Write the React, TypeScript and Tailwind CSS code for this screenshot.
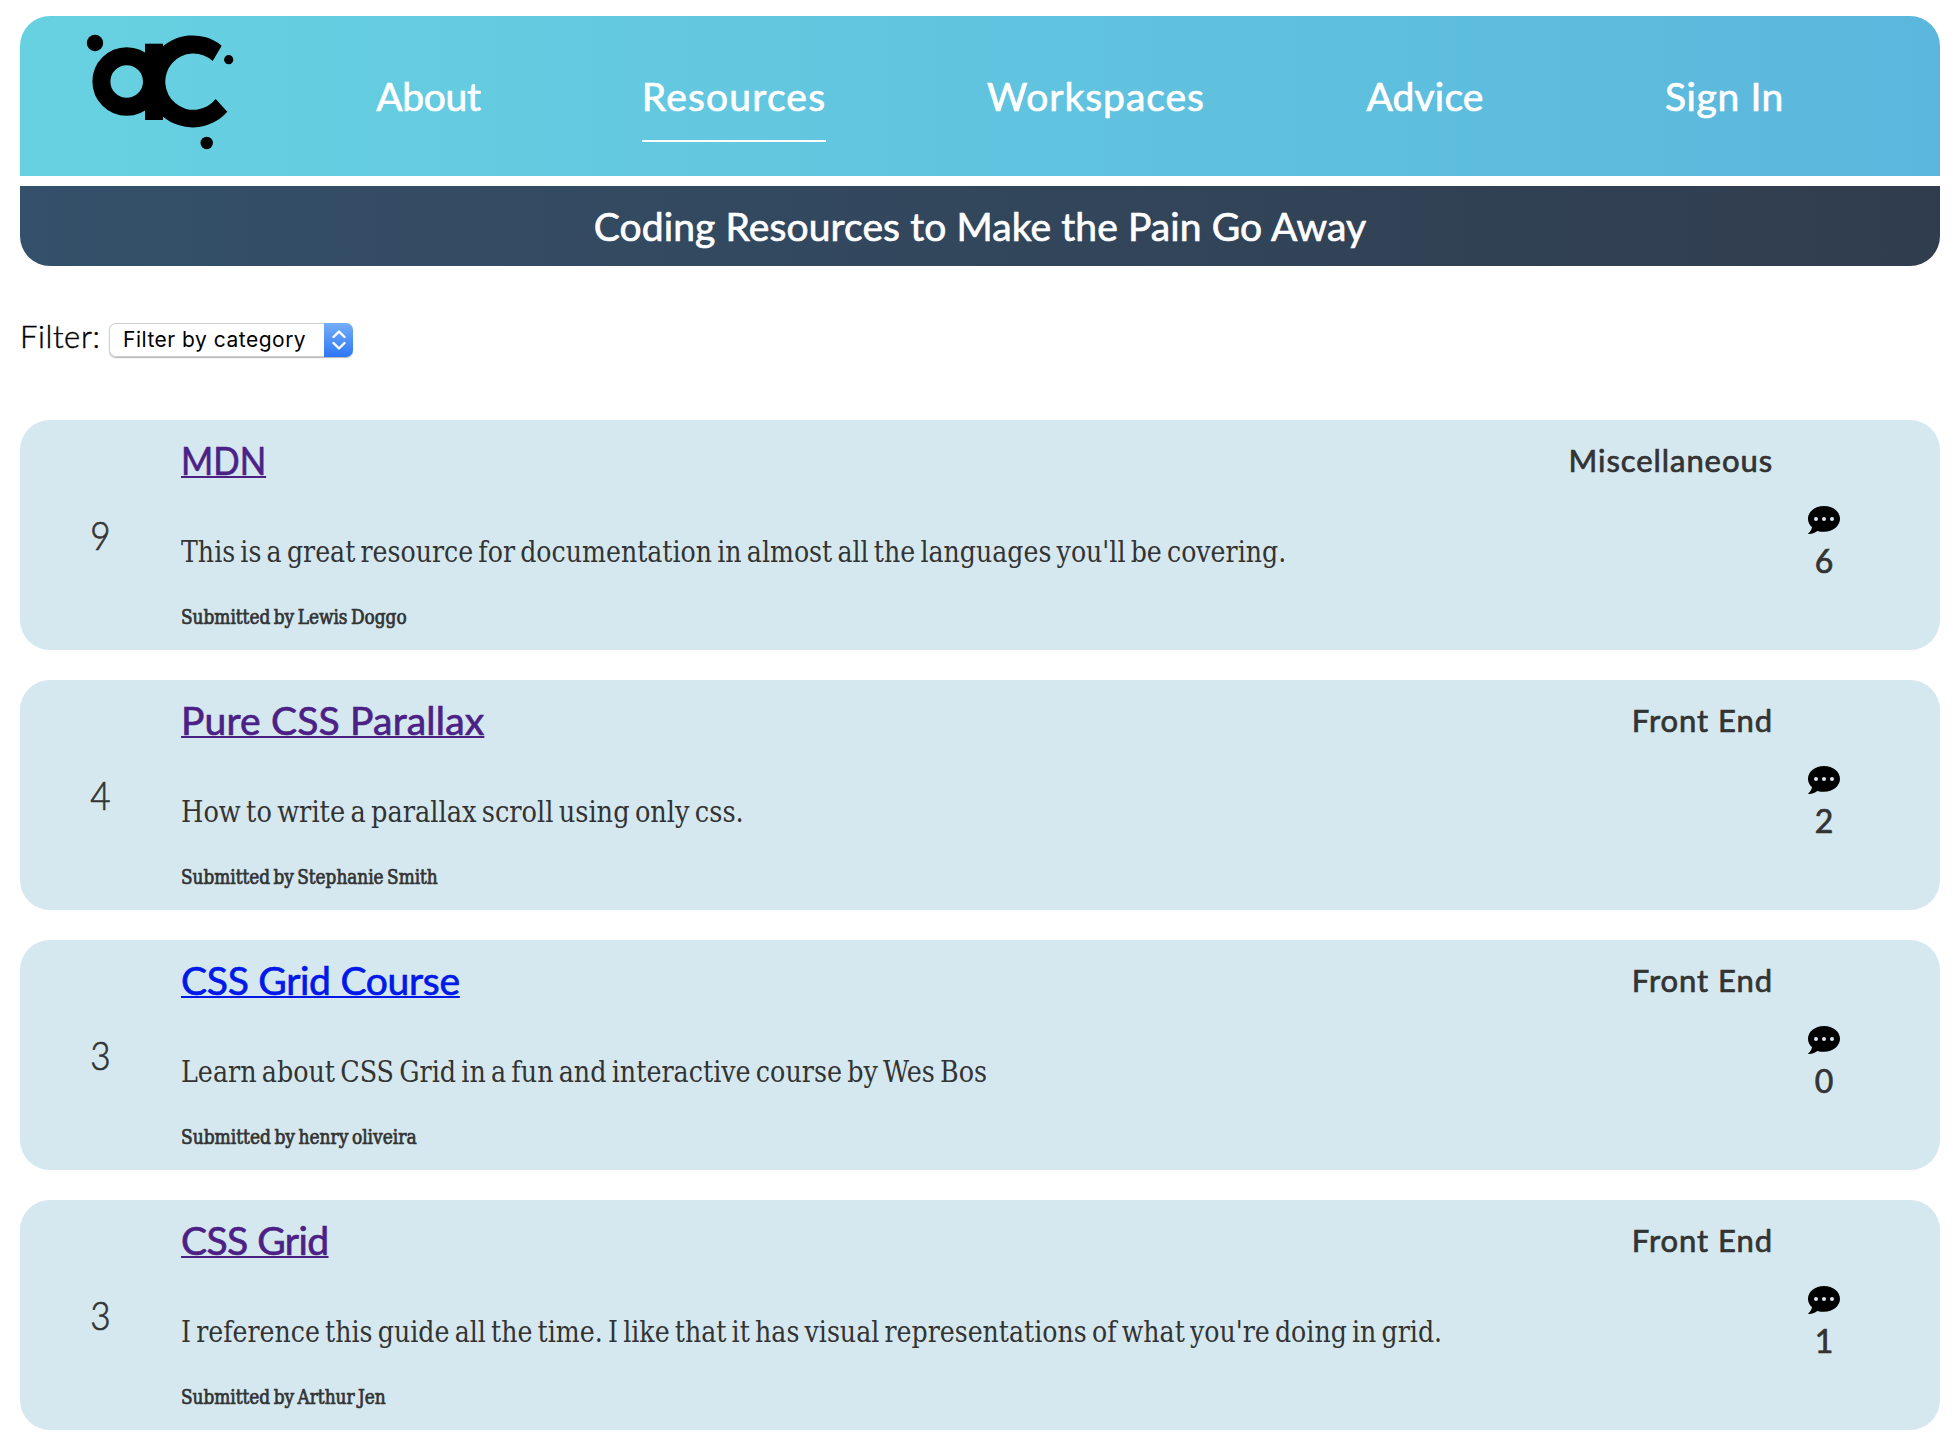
type Resource = {
  votes: number;
  title: string;
  titleClass: string;
  text: string;
  textClass: string;
  author: string;
  authorClass: string;
  category: string;
  categoryClass: string;
  comments: number;
};

const NAV = [
  { label: "About", className: "w-[105px] tracking-[-0.35px] border-transparent" },
  { label: "Resources", className: "w-[184px] tracking-[1.2px] border-white" },
  { label: "Workspaces", className: "w-[218px] tracking-[0.98px] border-transparent" },
  { label: "Advice", className: "w-[118px] tracking-[0.18px] border-transparent" },
  { label: "Sign In", className: "ml-5 w-[119px] tracking-[0.6px] border-transparent" },
];

const RESOURCES: Resource[] = [
  {
    votes: 9,
    title: "MDN",
    titleClass: "text-[#4c2185] scale-x-[0.89]",
    text: "This is a great resource for documentation in almost all the languages you'll be covering.",
    textClass: "scale-x-[0.936]",
    author: "Lewis Doggo",
    authorClass: "scale-x-[0.941]",
    category: "Miscellaneous",
    categoryClass: "tracking-[0.93px]",
    comments: 6,
  },
  {
    votes: 4,
    title: "Pure CSS Parallax",
    titleClass: "text-[#4c2185] tracking-[0.2px]",
    text: "How to write a parallax scroll using only css.",
    textClass: "scale-x-[0.951]",
    author: "Stephanie Smith",
    authorClass: "scale-x-[0.938]",
    category: "Front End",
    categoryClass: "tracking-[0.95px]",
    comments: 2,
  },
  {
    votes: 3,
    title: "CSS Grid Course",
    titleClass: "text-[#0018e8] tracking-[-0.28px]",
    text: "Learn about CSS Grid in a fun and interactive course by Wes Bos",
    textClass: "scale-x-[0.941]",
    author: "henry oliveira",
    authorClass: "scale-x-[0.948]",
    category: "Front End",
    categoryClass: "tracking-[0.95px]",
    comments: 0,
  },
  {
    votes: 3,
    title: "CSS Grid",
    titleClass: "text-[#4c2185] tracking-[-0.55px]",
    text: "I reference this guide all the time. I like that it has visual representations of what you're doing in grid.",
    textClass: "scale-x-[0.936]",
    author: "Arthur Jen",
    authorClass: "scale-x-[0.94]",
    category: "Front End",
    categoryClass: "tracking-[0.95px]",
    comments: 1,
  },
];

function Logo() {
  return (
    <svg viewBox="84 24 152 128" className="h-[128px] w-[152px] shrink-0" role="img" aria-label="ac">
      <circle cx="95" cy="43" r="8.2" />
      <circle cx="228.7" cy="59.7" r="4.6" />
      <circle cx="206.7" cy="143" r="6.2" />
      <circle cx="126.7" cy="81.5" r="25.3" fill="none" stroke="black" strokeWidth="18" />
      <rect x="145" y="43.7" width="18" height="76.3" />
      <path d="M221.7 45.7A46 46 0 1 0 227.3 111.7L215.7 99A28.2 28.2 0 1 1 212.7 61Z" />
    </svg>
  );
}

function CommentIcon() {
  return (
    <svg viewBox="0 0 32 28" className="h-7 w-8 shrink-0">
      <path d="M16 0C7 0 0 5.6 0 12.8c0 3.300 1.500 6.300 4 8.500C3.500 24 2 26.200.3 27.200c-.5.4-.2.8.4.8 3.300-.1 6.300-1.200 8.600-3.100 2.100.6 4.300.9 6.700.9 9 0 16-5.800 16-13S25 0 16 0Z" />
      <g fill="#d5e8ef">
        <circle cx="8" cy="13" r="2" />
        <circle cx="16" cy="13" r="2" />
        <circle cx="24" cy="13" r="2" />
      </g>
    </svg>
  );
}

function CategorySelect() {
  return (
    <button
      type="button"
      className="ml-auto flex h-[34px] w-[244px] overflow-hidden rounded-[7px] bg-white text-left font-['Inter',sans-serif] text-[21px] tracking-[0.5px] text-black shadow-[inset_0_0_0_1px_#d0d0d0,0_1px_1px_#b4b4b4]"
    >
      <span className="flex-1 whitespace-nowrap pl-[14px] leading-[34px]">Filter by category</span>
      <span className="flex w-[29px] items-center justify-center bg-linear-to-b from-[#74aef5] to-[#2d76f7]">
        <svg viewBox="0 0 14 22" className="h-[22px] w-[14px]" fill="none" stroke="white" strokeWidth="2.4" strokeLinecap="round" strokeLinejoin="round">
          <path d="M1.500 8 7 2.500 12.500 8M1.500 14 7 19.500 12.500 14" />
        </svg>
      </span>
    </button>
  );
}

function ResourceCard({ item }: { item: Resource }) {
  return (
    <article className="flex h-[230px] rounded-[30px] bg-[#d5e8ef] text-[#333]">
      <div className="flex w-[161px] items-center justify-center text-[39px] font-light leading-none [-webkit-text-stroke:0.7px]">
        <span className="scale-x-[0.9]">{item.votes}</span>
      </div>
      <div className="flex min-w-0 flex-1 flex-col pt-4">
        <div className="flex h-12 items-center justify-between">
          <a
            href="#"
            className={`origin-left text-[39px] leading-[48px] underline decoration-2 underline-offset-[1px] [-webkit-text-stroke:0.7px] [text-decoration-skip-ink:none] ${item.titleClass}`}
          >
            {item.title}
          </a>
          <span className={`text-[31px] leading-[48px] [-webkit-text-stroke:0.7px] ${item.categoryClass}`}>{item.category}</span>
        </div>
        <p
          className={`mt-12 h-10 w-max origin-left whitespace-nowrap font-['DejaVu_Serif_Condensed','DejaVu_Serif',serif] text-[30px] leading-10 [word-spacing:-3px] ${item.textClass}`}
        >
          {item.text}
        </p>
        <p
          className={`mt-[30px] h-[30px] w-max origin-left whitespace-nowrap font-['DejaVu_Serif_Condensed','DejaVu_Serif',serif] text-[20px] leading-[30px] [-webkit-text-stroke:0.7px] [word-spacing:-2px] ${item.authorClass}`}
        >
          Submitted by {item.author}
        </p>
      </div>
      <div className="mr-[65px] flex w-[102px] flex-col items-center pt-[86px] text-black">
        <CommentIcon />
        <span className="mt-3 text-[32px] leading-[30px] text-[#333] [-webkit-text-stroke:0.7px]">{item.comments}</span>
      </div>
    </article>
  );
}

export default function App() {
  return (
    <div className="h-[1450px] w-[1956px] overflow-hidden bg-white pl-5 pr-4 pt-4 font-['Lato',sans-serif]">
      <header className="flex h-40 rounded-t-[30px] bg-linear-to-r from-[#67d1e1] to-[#5bb7dd]">
        <div className="w-[356px] pl-16 pt-2">
          <Logo />
        </div>
        <nav className="flex items-center gap-[161px] text-[39px] text-white [-webkit-text-stroke:0.7px]">
          {NAV.map((item) => (
            <a
              key={item.label}
              href="#"
              className={`flex h-[92px] items-center justify-center whitespace-nowrap border-b-2 pt-[2px] leading-none ${item.className}`}
            >
              {item.label}
            </a>
          ))}
        </nav>
      </header>
      <h1 className="mt-[10px] h-20 rounded-b-[30px] bg-linear-to-r from-[#34506a] to-[#303d4e] text-center text-[39px] leading-[80px] tracking-[0.1px] text-white [-webkit-text-stroke:0.7px]">
        Coding Resources to Make the Pain Go Away
      </h1>
      <div className="mt-[57px] flex h-[34px] w-[333px] items-center">
        <span className="-mt-[8px] text-[31px] font-light leading-none tracking-[0.6px] text-black [-webkit-text-stroke:0.4px]">Filter:</span>
        <CategorySelect />
      </div>
      <main className="mt-[63px] flex flex-col gap-[30px]">
        {RESOURCES.map((item) => (
          <ResourceCard key={item.title} item={item} />
        ))}
      </main>
    </div>
  );
}
